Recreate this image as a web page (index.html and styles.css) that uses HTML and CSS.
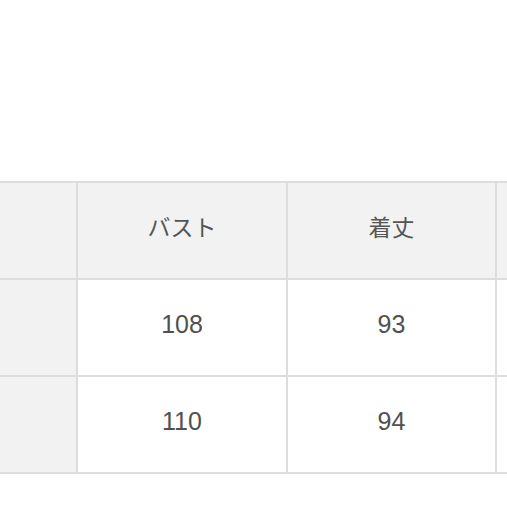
FILE: index.html
```html
<!DOCTYPE html>
<html lang="ja">
<head>
<meta charset="utf-8">
<link rel="stylesheet" href="styles.css">
</head>
<body>
<div class="page">
  <div class="sizes">
    <div class="cell head side"></div>
    <div class="cell head">バスト</div>
    <div class="cell head">着丈</div>
    <div class="cell head"></div>
    <div class="cell side"></div>
    <div class="cell">108</div>
    <div class="cell">93</div>
    <div class="cell"></div>
    <div class="cell side"></div>
    <div class="cell">110</div>
    <div class="cell">94</div>
    <div class="cell"></div>
  </div>
</div>
</body>
</html>
```
FILE: styles.css
```css
html, body {
  margin: 0;
  padding: 0;
  background: #ffffff;
  overflow: hidden;
}
.page {
  width: 507px;
  height: 507px;
  overflow: hidden;
  padding-top: 181px;
  box-sizing: border-box;
}
.sizes {
  display: grid;
  grid-template-columns: 76px 208px 207px 208px;
  grid-auto-rows: 95px;
  gap: 2px;
  padding: 2px 0;
  background: #dddddd;
  width: max-content;
}
.cell {
  background: #ffffff;
  display: flex;
  align-items: center;
  justify-content: center;
  box-sizing: border-box;
  padding-bottom: 6px;
  font-family: "Liberation Sans", "Noto Sans CJK JP", sans-serif;
  font-size: 25px;
  color: #505050;
}
.cell.head,
.cell.side {
  background: #f2f2f2;
}
.cell.head {
  font-family: "Noto Sans CJK JP", sans-serif;
  font-size: 23px;
  font-weight: 400;
  color: #555555;
  padding-bottom: 9px;
}
```
